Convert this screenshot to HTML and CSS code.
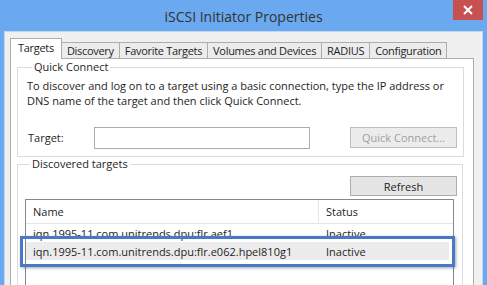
FILE: index.html
```html
<!DOCTYPE html>
<html>
<head>
<meta charset="utf-8">
<link rel="stylesheet" href="styles.css">
</head>
<body>
<div class="window">
  <div class="titlebar">
    <div class="title">iSCSI Initiator Properties</div>
    <div class="close"><svg width="12" height="10" viewBox="0 0 12 10"><path d="M2 1 L10 9 M10 1 L2 9" stroke="#fff" stroke-width="2"/></svg></div>
  </div>
  <div class="client">
    <div class="tabs">
      <div class="tab active">Targets</div>
      <div class="tab">Discovery</div>
      <div class="tab">Favorite Targets</div>
      <div class="tab">Volumes and Devices</div>
      <div class="tab">RADIUS</div>
      <div class="tab">Configuration</div>
    </div>
    <div class="panel">
      <fieldset class="group quick">
        <legend>Quick Connect</legend>
        <p class="desc">To discover and log on to a target using a basic connection, type the IP address or<br>DNS name of the target and then click Quick Connect.</p>
        <div class="target-row">
          <span class="label">Target:</span>
          <div class="input"></div>
          <div class="btn disabled">Quick Connect...</div>
        </div>
      </fieldset>
      <fieldset class="group discovered">
        <legend>Discovered targets</legend>
        <div class="refresh-row"><div class="btn">Refresh</div></div>
        <div class="list">
          <div class="list-head">
            <div class="col-name">Name</div>
            <div class="col-status">Status</div>
          </div>
          <div class="row">
            <div class="col-name">iqn.1995-11.com.unitrends.dpu:flr.aef1</div>
            <div class="col-status">Inactive</div>
          </div>
          <div class="row sel">
            <div class="col-name">iqn.1995-11.com.unitrends.dpu:flr.e062.hpel810g1</div>
            <div class="col-status">Inactive</div>
          </div>
          <div class="highlight"></div>
        </div>
      </fieldset>
    </div>
  </div>
</div>
</body>
</html>
```
FILE: styles.css
```css
* { box-sizing: border-box; }
html, body { margin: 0; padding: 0; }
body {
  width: 487px;
  height: 285px;
  overflow: hidden;
  background: #6aa8f0;
  font-family: "Open Sans", "Noto Sans", sans-serif;
  font-size: 11px;
  color: #1e1e1e;
}
.window { position: relative; height: 285px; }
.titlebar {
  height: 31px;
  display: flex;
  justify-content: center;
  align-items: center;
}
.title {
  font-size: 14px;
  color: #333;
  padding-top: 1px;
}
.close {
  position: absolute;
  top: 0;
  right: 4px;
  width: 30px;
  height: 20px;
  background: #c75050;
  display: flex;
  align-items: center;
  justify-content: center;
}
.client {
  margin: 0 4px;
  height: 254px;
  background: #f0f0f0;
  border: 1px solid #c3d7ef;
  border-bottom: none;
  padding: 6px 8px 0 5px;
}
.tabs {
  display: flex;
  align-items: flex-end;
  height: 20px;
  position: relative;
  z-index: 2;
}
.tab {
  height: 16px;
  padding: 0 5px;
  line-height: 15px;
  letter-spacing: -0.3px;
  background: #ececec;
  border: 1px solid #acacac;
  border-bottom: none;
  margin-left: -1px;
  white-space: nowrap;
}
.tab.active {
  height: 21px;
  margin-left: 0;
  margin-bottom: -1px;
  background: #fff;
  padding: 0 7px;
  line-height: 18px;
  z-index: 3;
  position: relative;
}
.panel {
  background: #fff;
  border: 1px solid #acacac;
  border-bottom: none;
  height: 228px;
  padding: 0 10px 0 6px;
}
.group {
  margin: 0;
  border: 1px solid #dcdcdc;
  padding: 0 6px 0 9px;
}
.group legend {
  padding: 0 2px;
  margin-left: 5px;
  line-height: 16px;
}
.quick { height: 98px; }
.desc {
  margin: 3px 0 0 0;
  line-height: 15px;
  white-space: nowrap;
}
.target-row {
  display: flex;
  align-items: flex-start;
  margin-top: 19px;
}
.label { width: 67px; padding-left: 1px; line-height: 21px; }
.input {
  width: 216px;
  height: 22px;
  border: 1px solid #acacac;
  background: #fff;
}
.btn {
  width: 107px;
  height: 20px;
  border: 1px solid #adadad;
  background: #e5e5e5;
  display: flex;
  align-items: center;
  justify-content: center;
  line-height: 1;
}
.target-row .btn { margin-left: 40px; height: 21px; }
.btn.disabled { color: #a0a0a0; border-color: #bfbfbf; background: #ececec; }
.discovered {
  margin-top: -1px;
  height: 140px;
  border-bottom: none;
  padding: 0 5px 0 7px;
}
.refresh-row {
  display: flex;
  justify-content: flex-end;
  margin-top: 4px;
}
.list {
  position: relative;
  margin-top: 3px;
  width: 429px;
  height: 90px;
  border: 1px solid #828790;
  border-bottom: none;
  background: #fff;
}
.list-head {
  display: flex;
  height: 24px;
  align-items: center;
  border-bottom: 1px solid #e5e5e5;
}
.list-head .col-name {
  border-right: 1px solid #e5e5e5;
  height: 23px;
  display: flex;
  align-items: center;
}
.col-name { width: 293px; padding-left: 7px; white-space: nowrap; }
.col-status { padding-left: 7px; }
.row {
  display: flex;
  height: 18px;
  align-items: center;
}
.row.sel { background: #ececec; margin-right: 4px; }
.highlight {
  position: absolute;
  left: -6px;
  top: 36px;
  width: 435px;
  height: 31px;
  border: 3px solid #4a78c8;
  box-shadow: 1px 1px 3px rgba(0,0,0,0.35);
}
```
